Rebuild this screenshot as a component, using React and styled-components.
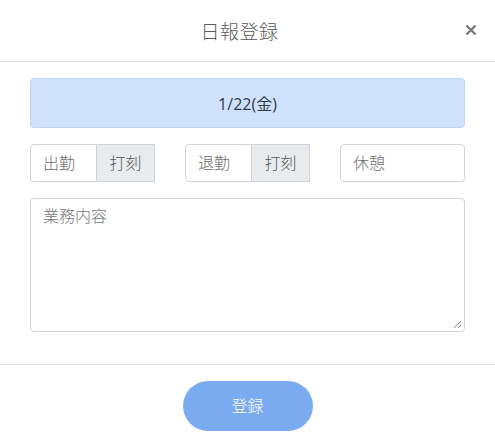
import React from "react";
import styled, { createGlobalStyle } from "styled-components";

const Global = createGlobalStyle`
  html, body { margin: 0; padding: 0; background: #fff; }
  body { font-family: "Noto Sans CJK JP", "Open Sans", sans-serif; color: #333; }
  * { box-sizing: border-box; }
`;

const Modal = styled.div`
  width: 495px;
  height: 447px;
  background: #fff;
  display: flex;
  flex-direction: column;
`;

const Header = styled.div`
  position: relative;
  height: 62px;
  border-bottom: 1px solid #e3e3e3;
  display: flex;
  align-items: center;
  justify-content: center;
  padding-right: 16px;
`;

const Title = styled.h5`
  margin: 0;
  font-size: 19px;
  font-weight: 300;
  color: #5a5a5a;
  line-height: 1;
  letter-spacing: 0.5px;
`;

const Close = styled.button`
  position: absolute;
  right: 16px;
  top: 20px;
  width: 16px;
  height: 20px;
  padding: 0;
  border: 0;
  background: none;
  display: flex;
  align-items: center;
  justify-content: center;
  cursor: pointer;
`;

const Body = styled.div`
  padding: 16px 30px 0;
  display: flex;
  flex-direction: column;
  gap: 16px;
  flex: 1;
`;

const DateBox = styled.div`
  height: 50px;
  background: #d0e2fb;
  border: 1px solid #bfd5f3;
  border-radius: 4px;
  display: flex;
  align-items: center;
  justify-content: center;
  font-family: "Open Sans", "Noto Sans CJK JP", sans-serif;
  font-size: 16px;
  color: #2f3a4a;
`;

const Row = styled.div`
  display: grid;
  grid-template-columns: repeat(3, 125px);
  justify-content: space-between;
`;

const Group = styled.div`
  display: flex;
  height: 38px;
`;

const Field = styled.div`
  flex: 1;
  height: 38px;
  border: 1px solid #cfd3d7;
  border-radius: ${(p) => (p.$alone ? "4px" : "4px 0 0 4px")};
  background: #fff;
  display: flex;
  align-items: center;
  padding: 0 12px 2px;
  font-size: 16px;
  font-weight: 300;
  color: #6d6d6d;
`;

const Addon = styled.div`
  width: 58px;
  height: 38px;
  border: 1px solid #cfd3d7;
  border-left: 0;
  background: #e9ecef;
  display: flex;
  align-items: center;
  justify-content: center;
  padding-bottom: 2px;
  font-size: 16px;
  font-weight: 300;
  color: #555;
`;

const TextArea = styled.div`
  position: relative;
  height: 134px;
  border: 1px solid #cfd3d7;
  border-radius: 4px;
  padding: 4px 12px;
  font-size: 16px;
  font-weight: 300;
  color: #777;
  line-height: 24px;
`;

const Grip = styled.svg`
  position: absolute;
  right: 2px;
  bottom: 2px;
`;

const Footer = styled.div`
  border-top: 1px solid #e3e3e3;
  height: 83px;
  display: flex;
  align-items: center;
  justify-content: center;
  padding-bottom: 1px;
`;

const Submit = styled.button`
  width: 130px;
  height: 50px;
  border: 0;
  border-radius: 25px;
  background: #7aabf1;
  color: #fff;
  font-family: "Noto Sans CJK JP", sans-serif;
  font-size: 16px;
  font-weight: 300;
  padding-bottom: 2px;
  cursor: pointer;
`;

export default function App() {
  return (
    <>
      <Global />
      <Modal>
        <Header>
          <Title>日報登録</Title>
          <Close aria-label="close">
            <svg width="12" height="12" viewBox="0 0 12 12">
              <path d="M1.5 1.5 L10.5 10.5 M10.5 1.5 L1.5 10.5" stroke="#7a7a7a" strokeWidth="2.4" strokeLinecap="butt" />
            </svg>
          </Close>
        </Header>
        <Body>
          <DateBox>1/22(金)</DateBox>
          <Row>
            <Group>
              <Field>出勤</Field>
              <Addon>打刻</Addon>
            </Group>
            <Group>
              <Field>退勤</Field>
              <Addon>打刻</Addon>
            </Group>
            <Group>
              <Field $alone>休憩</Field>
            </Group>
          </Row>
          <TextArea>
            業務内容
            <Grip width="10" height="10" viewBox="0 0 10 10">
              <path d="M9 2 L2 9 M9 6 L6 9" stroke="#888" strokeWidth="1" />
            </Grip>
          </TextArea>
        </Body>
        <Footer>
          <Submit>登録</Submit>
        </Footer>
      </Modal>
    </>
  );
}
